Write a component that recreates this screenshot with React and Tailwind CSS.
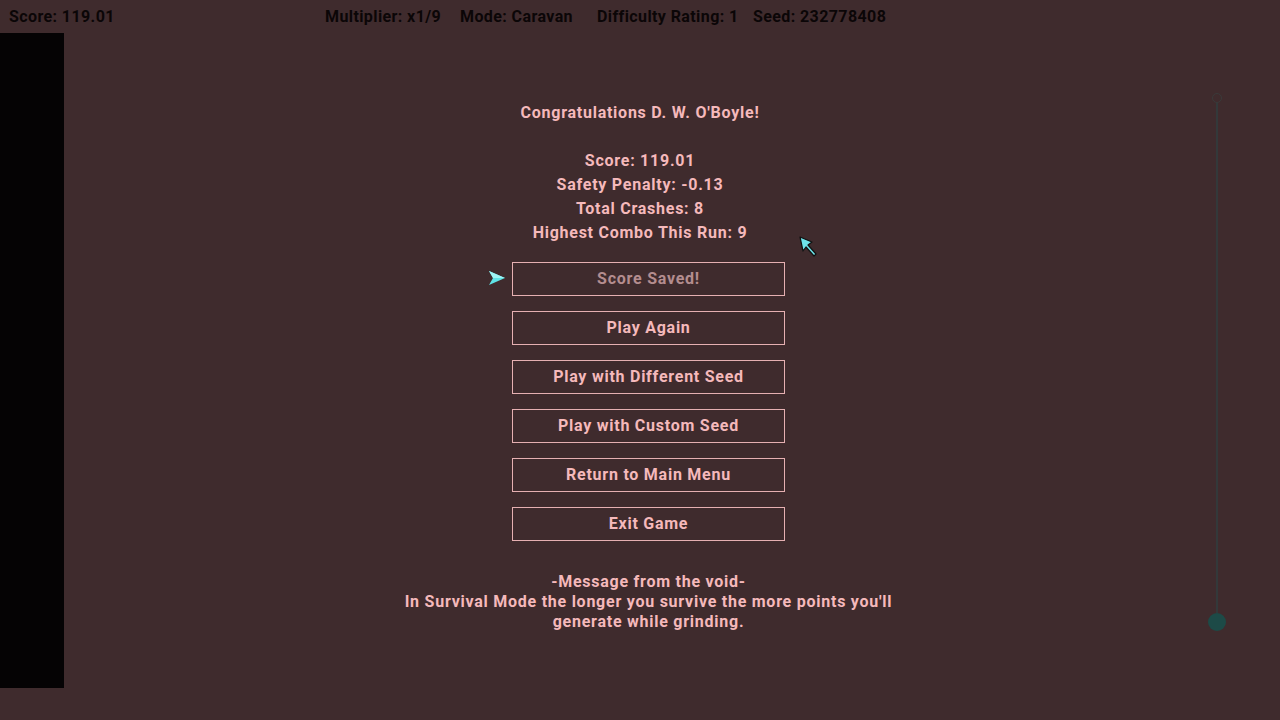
import React from 'react';

const buttons = [
  { label: 'Score Saved!', muted: true, selected: true },
  { label: 'Play Again' },
  { label: 'Play with Different Seed' },
  { label: 'Play with Custom Seed' },
  { label: 'Return to Main Menu' },
  { label: 'Exit Game' },
];

function SelectArrow() {
  return (
    <svg width="18" height="16" viewBox="0 0 18 16" className="absolute left-[-25px] top-[7px]">
      <path d="M1 1 L17 8 L1 15 L5 8 Z" fill="#5fe3e6" />
      <path d="M1 1 L17 8 L5 8 Z" fill="#9ff5f5" />
    </svg>
  );
}

function Cursor() {
  return (
    <svg width="22" height="24" viewBox="0 0 22 24" className="absolute left-[798px] top-[235px]">
      <path d="M2 2 L14 7 L10 10 L18 19 L16 21 L8 12 L5 16 Z" fill="#6ee4ea" stroke="#111" strokeWidth="1.2" strokeLinejoin="round" />
    </svg>
  );
}

export default function App() {
  return (
    <div className="relative w-[1280px] h-[720px] bg-[#3f2b2d] overflow-hidden font-['Roboto','DejaVu_Sans',sans-serif] font-bold">
      {/* top status bar */}
      <div className="h-[33px] flex items-center text-[16px] tracking-[0.4px] text-[#0b0607]">
        <div className="w-[325px] pl-[9px]">Score: 119.01</div>
        <span className="w-[135px]">Multiplier: x1/9</span>
        <span className="w-[137px]">Mode: Caravan</span>
        <span className="w-[156px]">Difficulty Rating: 1</span>
        <span>Seed: 232778408</span>
      </div>

      <div className="flex">
        <div className="w-[64px] h-[655px] bg-[#050304]" />

        {/* results panel */}
        <div className="w-[1144px] pl-[8px] pt-[68px] flex flex-col items-center text-[#f5b9bb] text-[16px] tracking-[0.75px]">
          <div className="flex flex-col items-center leading-[24px]">
            <p>Congratulations D. W. O'Boyle!</p>
            <p>&nbsp;</p>
            <p>Score: 119.01</p>
            <p>Safety Penalty: -0.13</p>
            <p>Total Crashes: 8</p>
            <p>Highest Combo This Run: 9</p>
          </div>

          <div className="ml-[17px] mt-[17px] flex flex-col gap-[15px]">
            {buttons.map((b) => (
              <div
                key={b.label}
                className={`relative w-[273px] h-[34px] border border-[#e6b0b2] flex items-center justify-center ${b.muted ? 'text-[#b48d8f]' : ''}`}
              >
                {b.selected && <SelectArrow />}
                {b.label}
              </div>
            ))}
          </div>

          <div className="ml-[17px] mt-[31px] w-[512px] text-center leading-[20px]">
            <p>-Message from the void-</p>
            <p>In Survival Mode the longer you survive the more points you'll generate while grinding.</p>
          </div>
        </div>

        {/* vertical slider */}
        <div className="w-[72px] pt-[60px]">
          <div className="w-[18px] flex flex-col items-center">
            <div className="w-[10px] h-[10px] rounded-full border border-[#3a3a3a]" />
            <div className="w-[2px] h-[510px] bg-[#33393a]" />
            <div className="w-[18px] h-[18px] rounded-full bg-[#1d4a47] blur-[0.5px]" />
          </div>
        </div>
      </div>

      <Cursor />
    </div>
  );
}
